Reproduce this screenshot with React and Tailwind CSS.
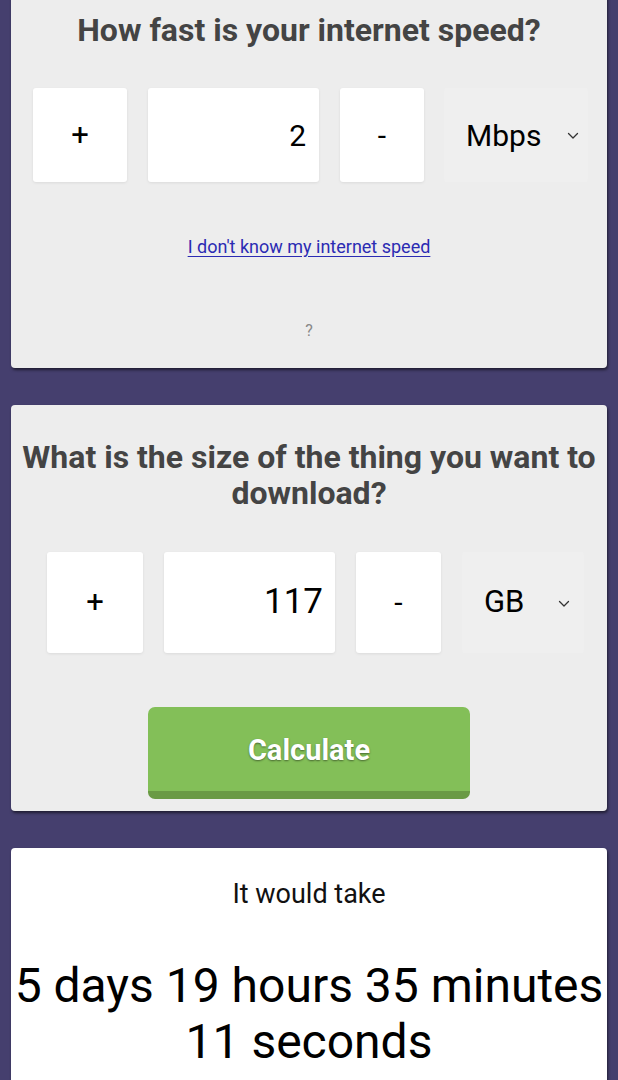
import React, { useState } from 'react';

const Chevron = ({ className }) => (
  <svg className={className} width="12" height="8" viewBox="0 0 12 8" fill="none">
    <path d="M1.5 1.5 L6 6 L10.5 1.5" stroke="#333" strokeWidth="1.3" strokeLinecap="round" strokeLinejoin="round" />
  </svg>
);

const Stepper = ({ value, unit, sizes }) => (
  <div className={`flex items-stretch ${sizes.row}`}>
    <button className={`${sizes.plus} bg-white rounded-[3px] shadow-[0_1px_3px_rgba(0,0,0,0.08)] flex items-center justify-center text-[31px] text-black`}>
      +
    </button>
    <div className={`${sizes.input} bg-white rounded-[3px] shadow-[0_1px_3px_rgba(0,0,0,0.08)] flex items-center justify-end ${sizes.valueText} text-black`}>
      {value}
    </div>
    <button className={`${sizes.minus} bg-white rounded-[3px] shadow-[0_1px_3px_rgba(0,0,0,0.08)] flex items-center justify-center text-[30px] text-black`}>
      -
    </button>
    <div className={`${sizes.select} bg-[#efefef] rounded-[3px] flex items-center pl-[22px] ${sizes.unitText} text-black`}>
      <span>{unit}</span>
      <Chevron className={sizes.chev} />
    </div>
  </div>
);

export default function App() {
  const [speed] = useState(2);
  const [size] = useState(117);

  return (
    <div className="min-h-[1080px] bg-[#453f6e] px-[11px] overflow-hidden" style={{ fontFamily: 'Roboto, "Noto Sans", sans-serif' }}>
      <div className="-mt-[10px] flex flex-col gap-[37px]">
        {/* speed card */}
        <div className="bg-[#ededed] rounded-[4px] shadow-[1px_2px_3px_rgba(0,0,0,0.55)] pt-[22px] pb-[25px] flex flex-col items-center">
          <h2 className="text-[32px] leading-[36px] font-bold text-[#444] text-center">How fast is your internet speed?</h2>
          <div className="mt-[40px] self-stretch pl-[22px]">
            <Stepper
              value={speed}
              unit="Mbps"
              sizes={{
                row: 'gap-[21px] h-[94px]',
                plus: 'w-[94px]',
                input: 'w-[171px] pr-[13px]',
                minus: 'w-[84px]',
                select: 'w-[144px] -ml-px',
                valueText: 'text-[30px]',
                unitText: 'text-[30px]',
                chev: 'ml-[26px] mt-[2px]',
              }}
            />
          </div>
          <a href="#" className="mt-[53px] text-[18px] leading-[24px] text-[#2b2bb3] underline underline-offset-[3px]">
            I don't know my internet speed
          </a>
          <div className="mt-[60px] text-[16px] leading-[24px] text-[#888]">?</div>
        </div>

        {/* size card */}
        <div className="bg-[#ededed] rounded-[4px] shadow-[1px_2px_3px_rgba(0,0,0,0.55)] pt-[34px] pb-[12px] px-[8px] flex flex-col items-center">
          <h2 className="text-[32px] leading-[36px] font-bold text-[#444] text-center">
            What is the size of the thing you want to download?
          </h2>
          <div className="mt-[41px] self-stretch pl-[28px]">
            <Stepper
              value={size}
              unit="GB"
              sizes={{
                row: 'gap-[21px] h-[101px]',
                plus: 'w-[96px]',
                input: 'w-[171px] pr-[12px]',
                minus: 'w-[85px]',
                select: 'w-[122px]',
                valueText: 'text-[35px]',
                unitText: 'text-[31px]',
                chev: 'ml-[34px] mt-[2px]',
              }}
            />
          </div>
          <button className="mt-[54px] w-[322px] h-[92px] bg-[#83bf58] rounded-[7px] border-b-[8px] border-[#6a9a45] text-white text-[29px] font-bold [text-shadow:0_1px_2px_rgba(0,0,0,0.45)] flex items-center justify-center pt-[4px]">
            Calculate
          </button>
        </div>

        {/* result card */}
        <div className="bg-white rounded-[4px] shadow-[1px_2px_3px_rgba(0,0,0,0.55)] pt-[30px] pb-[40px] flex flex-col items-center">
          <p className="text-[27px] leading-[32px] text-[#111]">It would take</p>
          <p className="mt-[48px] text-[48px] leading-[56px] text-black text-center whitespace-nowrap">
            5 days 19 hours 35 minutes
            <br />
            11 seconds
          </p>
        </div>
      </div>
    </div>
  );
}
